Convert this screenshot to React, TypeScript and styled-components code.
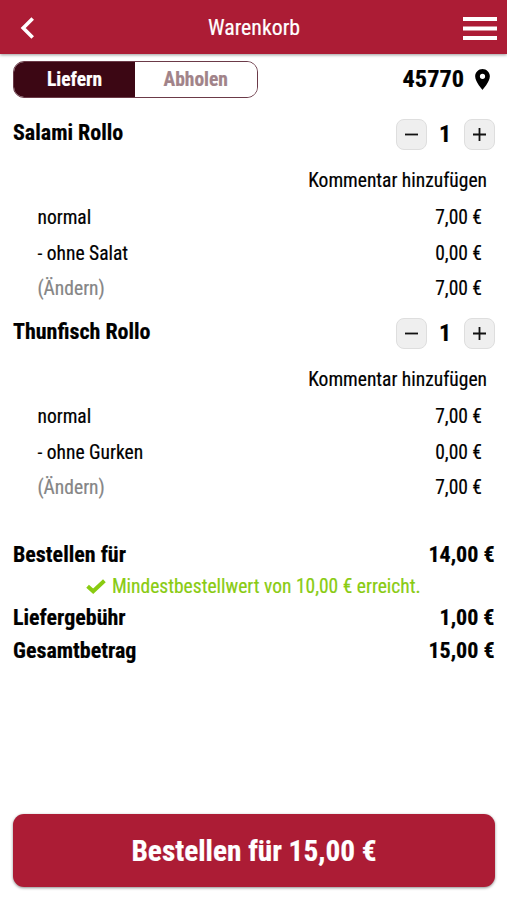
import React from 'react';
import styled, { createGlobalStyle } from 'styled-components';

const GlobalStyle = createGlobalStyle`
  *, *::before, *::after { box-sizing: border-box; }
  body { margin: 0; background: #fff; }
  button { font: inherit; color: inherit; padding: 0; border: 0; background: none; }
`;

const Page = styled.div`
  height: 900px;
  display: flex;
  flex-direction: column;
  background: #fff;
  color: #000;
  font-family: 'Roboto Condensed', Roboto, sans-serif;
  font-stretch: 75%;
  font-size: 19.5px;
  font-weight: 400;
  line-height: 24px;
  -webkit-text-stroke: 0.2px currentColor;
  overflow: hidden;
`;

const Header = styled.header`
  flex: none;
  height: 54px;
  padding: 0 10px 0 20px;
  display: grid;
  grid-template-columns: 34px 1fr 34px;
  align-items: center;
  background: #ac1c35;
  color: #fff;
  box-shadow: 0 1px 3px rgba(0, 0, 0, 0.4);
`;

const Title = styled.h1`
  margin: 0;
  padding: 2px 9px 0 0;
  text-align: center;
  font-size: 21.8px;
  font-weight: 400;
`;

const IconButton = styled.button`
  display: flex;
  align-items: center;
  padding-top: 2px;
`;

const Toolbar = styled.div`
  flex: none;
  height: 43px;
  margin-top: 7px;
  padding: 0 17px 0 13px;
  display: flex;
  justify-content: space-between;
  align-items: flex-start;
`;

const Toggle = styled.div`
  width: 244.5px;
  height: 36.5px;
  display: grid;
  grid-template-columns: 121px 1fr;
  border: 1px solid #6b3a48;
  border-radius: 11px;
  overflow: hidden;
`;

const ToggleOption = styled.button<{ $active?: boolean }>`
  padding-top: 2px;
  background: ${p => (p.$active ? '#3c0714' : '#fff')};
  color: ${p => (p.$active ? '#fff' : '#a18389')};
  font-weight: 700;
`;

const Place = styled.div`
  height: 36px;
  display: flex;
  align-items: center;
  gap: 11px;
  font-size: 24.3px;
  font-weight: 700;
`;

const Item = styled.section`
  flex: none;
  height: 199px;
  padding: 0 13px;
`;

const ItemHead = styled.div`
  height: 58px;
  padding-top: 15px;
  display: flex;
  justify-content: space-between;
  align-items: flex-start;
`;

const ItemName = styled.h2`
  margin: 2px 0 0;
  font-size: 22px;
  line-height: 24px;
  font-weight: 700;
`;

const Stepper = styled.div`
  display: flex;
  align-items: center;
  justify-content: space-between;
  width: 99px;
  margin-right: -1px;
`;

const StepButton = styled.button`
  width: 30.5px;
  height: 30.5px;
  display: grid;
  place-items: center;
  border: 1px solid #dedede;
  border-radius: 8px;
  background: #efefef;
`;

const Count = styled.span`
  margin-right: 1px;
  font-size: 24px;
  line-height: 22px;
  font-weight: 700;
`;

const Comment = styled.div`
  height: 36px;
  padding: 7px 7px 0 0;
  text-align: right;
`;

const Line = styled.div<{ $muted?: boolean }>`
  height: 35.5px;
  padding: 8px 12px 0 24.5px;
  display: flex;
  justify-content: space-between;

  span:first-child { color: ${p => (p.$muted ? '#858585' : 'inherit')}; }
`;

const Summary = styled.section`
  flex: none;
  margin-top: 36px;
  padding: 0 12.5px 0 13px;
`;

const Total = styled.div`
  height: 33px;
  display: flex;
  justify-content: space-between;
  align-items: center;
  font-size: 22px;
  font-weight: 700;
`;

const Notice = styled.div`
  height: 30px;
  padding: 1px 1px 0 0;
  display: flex;
  align-items: center;
  justify-content: center;
  gap: 6px;
  color: #89cb11;
`;

const OrderButton = styled.button`
  flex: none;
  height: 73px;
  margin: auto 12px 13px 13px;
  border-radius: 11px;
  background: #ac1c35;
  color: #fff;
  font-size: 29.3px;
  font-weight: 700;
  box-shadow: 0 1px 3px rgba(0, 0, 0, 0.45);
`;

const items = [
  { name: 'Salami Rollo', extra: '- ohne Salat' },
  { name: 'Thunfisch Rollo', extra: '- ohne Gurken' },
];

function StepIcon({ plus }: { plus?: boolean }) {
  return (
    <svg width="15" height="15" viewBox="0 0 15 15" stroke="#111" strokeWidth="1.8">
      <path d={plus ? 'M1 7.5H14M7.5 1V14' : 'M1 7.5H14'} />
    </svg>
  );
}

export default function App() {
  return (
    <Page>
      <GlobalStyle />
      <Header>
        <IconButton aria-label="Zurück">
          <svg width="15" height="22" viewBox="0 0 15 22" fill="none" stroke="#fff" strokeWidth="3.6">
            <path d="M12.7 1.4L3.2 11L12.7 20.6" />
          </svg>
        </IconButton>
        <Title>Warenkorb</Title>
        <IconButton aria-label="Menü">
          <svg width="34" height="23" viewBox="0 0 34 23" fill="#fff">
            <path d="M0 0h34v4H0zM0 9.5h34v4H0zM0 19h34v4H0z" />
          </svg>
        </IconButton>
      </Header>
      <Toolbar>
        <Toggle>
          <ToggleOption $active>Liefern</ToggleOption>
          <ToggleOption>Abholen</ToggleOption>
        </Toggle>
        <Place>
          <span>45770</span>
          <svg width="15" height="21" viewBox="5 2 14 20" fill="#000">
            <path d="M12 2C8.13 2 5 5.13 5 9c0 5.25 7 13 7 13s7-7.75 7-13c0-3.87-3.13-7-7-7zm0 9.5a2.5 2.5 0 0 1 0-5 2.5 2.5 0 0 1 0 5z" />
          </svg>
        </Place>
      </Toolbar>
      {items.map(item => (
        <Item key={item.name}>
          <ItemHead>
            <ItemName>{item.name}</ItemName>
            <Stepper>
              <StepButton aria-label="Weniger"><StepIcon /></StepButton>
              <Count>1</Count>
              <StepButton aria-label="Mehr"><StepIcon plus /></StepButton>
            </Stepper>
          </ItemHead>
          <Comment>Kommentar hinzufügen</Comment>
          <Line><span>normal</span><span>7,00 €</span></Line>
          <Line><span>{item.extra}</span><span>0,00 €</span></Line>
          <Line $muted><span>(Ändern)</span><span>7,00 €</span></Line>
        </Item>
      ))}
      <Summary>
        <Total><span>Bestellen für</span><span>14,00 €</span></Total>
        <Notice>
          <svg width="20" height="15" viewBox="0 0 20 15" fill="none" stroke="#89cb11" strokeWidth="4">
            <path d="M1.6 7.2L7.2 12.2L18.4 1.8" />
          </svg>
          <span>Mindestbestellwert von 10,00 € erreicht.</span>
        </Notice>
        <Total><span>Liefergebühr</span><span>1,00 €</span></Total>
        <Total><span>Gesamtbetrag</span><span>15,00 €</span></Total>
      </Summary>
      <OrderButton>Bestellen für 15,00 €</OrderButton>
    </Page>
  );
}
